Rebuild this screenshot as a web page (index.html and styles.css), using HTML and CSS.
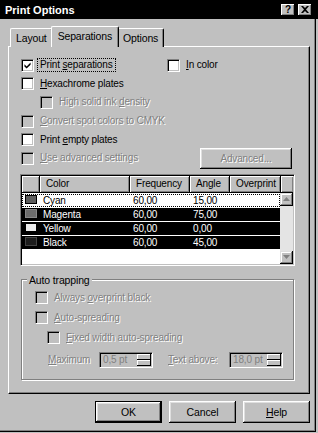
FILE: index.html
```html
<!DOCTYPE html>
<html lang="en">
<head>
    <meta charset="UTF-8">
    <title>Print Options</title>
    <link rel="stylesheet" href="styles.css">
</head>
<body>
<div class="dialog">
    <div class="titlebar">
        <span class="title">Print Options</span>
        <div class="title-btns">
            <span class="tbtn">?</span>
            <span class="tbtn"><svg width="8" height="7" viewBox="0 0 8 7"><path d="M0 0h2l2 2l2-2h2l-3 3.5l3 3.5h-2l-2-2l-2 2h-2l3-3.5z" fill="#000"/></svg></span>
        </div>
    </div>
    <div class="client">
        <div class="tabs">
            <span class="tab">Layout</span>
            <span class="tab sel">Separations</span>
            <span class="tab">Options</span>
        </div>
        <div class="panel">
            <!-- checkboxes -->
            <div class="row">
                <label class="check col1 focus"><span class="box"><svg width="7" height="7" viewBox="0 0 7 8"><path d="M0 2.5L2.5 5L7 0.5V3L2.5 7.5L0 5z" fill="#000"/></svg></span><span class="lbl">Print <u>s</u>eparations</span></label>
                <label class="check"><span class="box"></span><span class="lbl"><u>I</u>n color</span></label>
            </div>
            <div class="row">
                <label class="check"><span class="box"></span><span class="lbl"><u>H</u>exachrome plates</span></label>
            </div>
            <div class="row indent">
                <label class="check off"><span class="box"></span><span class="lbl">High solid ink <u>d</u>ensity</span></label>
            </div>
            <div class="row">
                <label class="check off"><span class="box"></span><span class="lbl"><u>C</u>onvert spot colors to CMYK</span></label>
            </div>
            <div class="row">
                <label class="check"><span class="box"></span><span class="lbl">Print <u>e</u>mpty plates</span></label>
            </div>
            <div class="row">
                <label class="check off"><span class="box"></span><span class="lbl"><u>U</u>se advanced settings</span></label>
                <span class="btn adv off">Advanced...</span>
            </div>

            <!-- plates list -->
            <div class="list">
                <div class="lhead">
                    <span class="hcell"></span>
                    <span class="hcell">Color</span>
                    <span class="hcell">Frequency</span>
                    <span class="hcell">Angle</span>
                    <span class="hcell">Overprint</span>
                    <span class="hcell fill"></span>
                </div>
                <div class="lbody">
                    <div class="lrows">
                        <div class="lrow cur"><span><i class="sw sw-c"></i></span><span>Cyan</span><span>60,00</span><span>15,00</span><span></span></div>
                        <div class="lrow hi"><span><i class="sw sw-m"></i></span><span>Magenta</span><span>60,00</span><span>75,00</span><span></span></div>
                        <div class="lrow hi"><span><i class="sw sw-y"></i></span><span>Yellow</span><span>60,00</span><span>0,00</span><span></span></div>
                        <div class="lrow hi"><span><i class="sw sw-k"></i></span><span>Black</span><span>60,00</span><span>45,00</span><span></span></div>
                    </div>
                    <div class="vscroll">
                        <span class="sbtn"><svg width="7" height="4" viewBox="0 0 7 4"><path d="M3.5 0L7 4H0z" fill="#808080"/></svg></span>
                        <span class="sbtn"><svg width="7" height="4" viewBox="0 0 7 4"><path d="M0 0H7L3.5 4z" fill="#808080"/></svg></span>
                    </div>
                </div>
            </div>

            <!-- auto trapping -->
            <fieldset class="group">
                <legend>Auto trapping</legend>
                <div class="grow">
                    <label class="check off"><span class="box"></span><span class="lbl">Always <u>o</u>verprint black</span></label>
                </div>
                <div class="grow">
                    <label class="check off"><span class="box"></span><span class="lbl"><u>A</u>uto-spreading</span></label>
                </div>
                <div class="grow sub">
                    <label class="check off"><span class="box"></span><span class="lbl"><u>F</u>ixed width auto-spreading</span></label>
                </div>
                <div class="spinrow">
                    <span class="slbl off lbl-max"><u>M</u>aximum</span>
                    <span class="spin"><span class="sval">0,5 pt</span><span class="sbtns"><i class="sarr"></i><i class="sarr"></i></span></span>
                    <span class="slbl off lbl-above"><u>T</u>ext above:</span>
                    <span class="spin"><span class="sval">18,0 pt</span><span class="sbtns"><i class="sarr"></i><i class="sarr"></i></span></span>
                </div>
            </fieldset>
        </div>

        <div class="buttons">
            <span class="btn def">OK</span>
            <span class="btn">Cancel</span>
            <span class="btn"><u>H</u>elp</span>
        </div>
    </div>
</div>
</body>
</html>
```

FILE: styles.css
```css
* {
    margin: 0;
    padding: 0;
    box-sizing: border-box;
}

body {
    background: #c0c0c0;
    font-family: "Liberation Sans", Arial, sans-serif;
    font-size: 10px;
    letter-spacing: -0.15px;
    color: #000;
}

.dialog {
    width: 318px;
    height: 432px;
    display: flex;
    flex-direction: column;
}

/* title bar */
.titlebar {
    height: 19px;
    flex: none;
    background: #000;
    display: flex;
    align-items: center;
    justify-content: space-between;
    padding: 0 6px 0 5px;
}

.title {
    color: #fff;
    font-weight: bold;
    font-size: 11px;
    letter-spacing: 0;
}

.title-btns {
    display: flex;
    gap: 3px;
}

.tbtn {
    width: 14px;
    height: 12px;
    background: #c0c0c0;
    box-shadow: inset -1px -1px #000, inset 1px 1px #fff, inset -2px -2px #808080;
    display: flex;
    align-items: center;
    justify-content: center;
    font-weight: bold;
    font-size: 10px;
    line-height: 1;
}

.client {
    flex: 1;
    margin-right: 2px;
    padding: 7px 5px 0 8px;
    border-right: 1px solid #000;
    border-bottom: 1px solid #000;
    box-shadow: inset -1px -1px #808080;
}

/* tabs */
.tabs {
    display: flex;
    align-items: flex-end;
    height: 21px;
    padding-left: 2px;
    margin-bottom: -1px;
}

.tab {
    height: 19px;
    padding: 3px 5px 0 5px;
    line-height: 13px;
    font-size: 10.5px;
    background: #c0c0c0;
    border: 1px solid #fff;
    border-right-color: #000;
    border-bottom: 0;
    border-radius: 2px 2px 0 0;
    box-shadow: inset -1px 0 #808080;
}

.tab.sel {
    height: 21px;
    margin: 0 -2px;
    padding: 3px 6px 0 6px;
    position: relative;
    z-index: 1;
}

.panel {
    height: 348px;
    border: 1px solid;
    border-color: #fff #000 #000 #fff;
    box-shadow: inset -1px -1px #808080;
    padding: 9px 12px 0 11px;
}

/* checkboxes */
.row {
    display: flex;
    align-items: center;
    height: 18.6px;
    padding-left: 1px;
}

.row.indent {
    padding-left: 20px;
}

.col1 {
    width: 146px;
}

.check {
    display: flex;
    align-items: center;
    gap: 3px;
    white-space: nowrap;
}

.box {
    width: 13px;
    height: 13px;
    flex: none;
    background: #fff;
    border: 1px solid;
    border-color: #808080 #fff #fff #808080;
    box-shadow: inset 1px 1px #000, inset -1px -1px #c0c0c0;
    display: flex;
    align-items: center;
    justify-content: center;
}

.off .box {
    background: #c0c0c0;
}

.lbl {
    padding: 0 2px;
    border: 1px dotted transparent;
    line-height: 12px;
}

.focus .lbl {
    border-color: #000;
}

.off .lbl,
.off.slbl,
.btn.off {
    color: #808080;
    text-shadow: 1px 1px #fff;
}

/* buttons */
.btn {
    width: 67px;
    height: 22px;
    display: flex;
    align-items: center;
    justify-content: center;
    font-size: 10.5px;
    background: #c0c0c0;
    box-shadow: inset -1px -1px #000, inset 1px 1px #fff, inset -2px -2px #808080, inset 2px 2px #dfdfdf;
}

.btn.def {
    border: 1px solid #000;
}

.btn.adv {
    width: 92px;
    height: 21px;
    margin-left: auto;
    margin-right: 5px;
    font-size: 10px;
}

/* list view */
.list {
    margin-top: 6px;
    width: 275px;
    height: 92px;
    border: 1px solid;
    border-color: #808080 #fff #fff #808080;
    box-shadow: inset 1px 1px #000, inset -1px -1px #c0c0c0;
    padding: 1px;
    background: #fff;
    display: flex;
    flex-direction: column;
}

.lhead {
    display: grid;
    grid-template-columns: 18px 90px 60px 40px 51px 1fr;
    height: 17px;
    flex: none;
}

.hcell {
    background: #c0c0c0;
    border-right: 1px solid #000;
    border-bottom: 1px solid #000;
    box-shadow: inset 1px 1px #fff, inset -1px -1px #808080;
    padding-left: 6px;
    line-height: 16px;
    white-space: nowrap;
    overflow: hidden;
}

.hcell.fill {
    border-right: 0;
}

.lbody {
    flex: 1;
    display: flex;
}

.lrows {
    width: 258px;
    padding-top: 1px;
}

.lrow {
    display: grid;
    grid-template-columns: 18px 90px 60px 40px 50px;
    height: 13px;
    margin-bottom: 1px;
    line-height: 13px;
}

.lrow span {
    padding-left: 3px;
    white-space: nowrap;
}

.lrow.hi {
    background: #000;
    color: #fff;
}

.lrow.cur {
    outline: 1px dotted #000;
    outline-offset: -1px;
}

.sw {
    display: inline-block;
    width: 12px;
    height: 9px;
    border: 1px solid #000;
    vertical-align: middle;
    margin-top: -2px;
}

.sw-c { background: #5e5e5e; }
.sw-m { background: #6c6c6c; border-color: #888; }
.sw-y { background: #ececec; }
.sw-k { background: #1c1c1c; border-color: #444; }

.vscroll {
    width: 13px;
    display: flex;
    flex-direction: column;
    justify-content: space-between;
    background: #e4e4e4;
}

.sbtn {
    height: 13px;
    background: #c0c0c0;
    box-shadow: inset -1px -1px #000, inset 1px 1px #dfdfdf, inset -2px -2px #808080, inset 2px 2px #fff;
    display: flex;
    align-items: center;
    justify-content: center;
}

/* group box */
.group {
    margin: 7px 0 0 1px;
    width: 273px;
    height: 107px;
    border: 1px solid #808080;
    box-shadow: 1px 1px #fff, inset 1px 1px #fff;
    padding: 1px 0 0 13px;
}

.group legend {
    margin-left: -8px;
    padding: 0 2px;
    line-height: 14px;
    font-size: 10.5px;
    background: #c0c0c0;
}

.grow {
    display: flex;
    align-items: center;
    height: 20px;
}

.grow.sub {
    padding-left: 12px;
}

.spinrow {
    display: flex;
    align-items: center;
    height: 24px;
    padding-left: 13px;
}

.slbl {
    white-space: nowrap;
}

.lbl-max {
    width: 51px;
}

.lbl-above {
    width: 61px;
    margin-left: 15px;
}

.spin {
    width: 54px;
    height: 16px;
    display: flex;
    border: 1px solid;
    border-color: #808080 #fff #fff #808080;
    box-shadow: inset 1px 1px #000, inset -1px -1px #c0c0c0;
    padding: 1px;
}

.sval {
    flex: 1;
    padding-left: 2px;
    line-height: 12px;
    color: #808080;
}

.sbtns {
    width: 14px;
    display: flex;
    flex-direction: column;
}

.sarr {
    flex: 1;
    background: #c0c0c0;
    box-shadow: inset -1px -1px #000, inset 1px 1px #fff;
}

.buttons {
    display: flex;
    justify-content: flex-end;
    gap: 7px;
    margin-top: 7px;
}
```
